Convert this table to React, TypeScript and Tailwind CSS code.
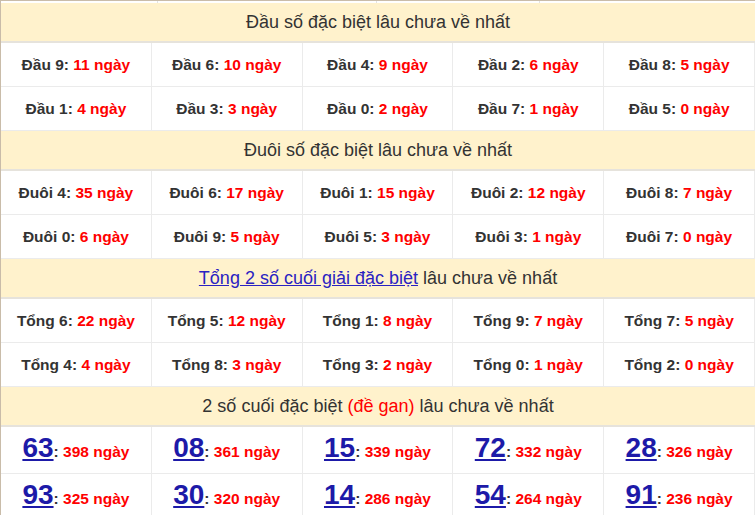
const dau = [
  [["Đầu 9", "11"], ["Đầu 6", "10"], ["Đầu 4", "9"], ["Đầu 2", "6"], ["Đầu 8", "5"]],
  [["Đầu 1", "4"], ["Đầu 3", "3"], ["Đầu 0", "2"], ["Đầu 7", "1"], ["Đầu 5", "0"]],
];

const duoi = [
  [["Đuôi 4", "35"], ["Đuôi 6", "17"], ["Đuôi 1", "15"], ["Đuôi 2", "12"], ["Đuôi 8", "7"]],
  [["Đuôi 0", "6"], ["Đuôi 9", "5"], ["Đuôi 5", "3"], ["Đuôi 3", "1"], ["Đuôi 7", "0"]],
];

const tong = [
  [["Tổng 6", "22"], ["Tổng 5", "12"], ["Tổng 1", "8"], ["Tổng 9", "7"], ["Tổng 7", "5"]],
  [["Tổng 4", "4"], ["Tổng 8", "3"], ["Tổng 3", "2"], ["Tổng 0", "1"], ["Tổng 2", "0"]],
];

const gan = [
  [["63", "398"], ["08", "361"], ["15", "339"], ["72", "332"], ["28", "326"]],
  [["93", "325"], ["30", "320"], ["14", "286"], ["54", "264"], ["91", "236"]],
];

function Header({ children }: { children: React.ReactNode }) {
  return (
    <div className="h-[40px] bg-[#fff2cc] border-b-2 border-[#e6e3dc] flex items-center justify-center text-[18px] text-[#333]">
      {children}
    </div>
  );
}

function Rows({ rows }: { rows: string[][][] }) {
  return (
    <>
      {rows.map((row, i) => (
        <div key={i} className="grid grid-cols-5 h-[44px] border-b border-[#ebebeb]">
          {row.map(([label, val], j) => (
            <div
              key={j}
              className="flex items-center justify-center border-r border-[#ebebeb] text-[15.5px] font-bold"
            >
              <span className="text-[#333]">{label}:</span>
              <span className="text-[#ff0000]">&nbsp;{val} ngày</span>
            </div>
          ))}
        </div>
      ))}
    </>
  );
}

export default function App() {
  return (
    <div
      className="w-[755px] h-[515px] overflow-hidden bg-white border-l border-[#c9bca9]"
      style={{ fontFamily: '"Liberation Sans", Arial, sans-serif' }}
    >
      {/* tail of the table above */}
      <div className="h-[3px] border-t border-[#c9bca9] flex">
        <div className="w-[157px] border-r border-[#e3e3e3]" />
        <div className="w-[219px] border-r border-[#e3e3e3]" />
        <div className="w-[163px] border-r border-[#e3e3e3]" />
        <div className="grow" />
      </div>

      <Header>Đầu số đặc biệt lâu chưa về nhất</Header>
      <Rows rows={dau} />

      <Header>Đuôi số đặc biệt lâu chưa về nhất</Header>
      <Rows rows={duoi} />

      <Header>
        <a href="#" className="text-[#2a22c2] underline">
          Tổng 2 số cuối giải đặc biệt
        </a>
        &nbsp;lâu chưa về nhất
      </Header>
      <Rows rows={tong} />

      <Header>
        2 số cuối đặc biệt&nbsp;<span className="text-[#ff0000]">(đề gan)</span>&nbsp;lâu chưa về nhất
      </Header>
      {gan.map((row, i) => (
        <div key={i} className="grid grid-cols-5 h-[47px] border-b border-[#ebebeb]">
          {row.map(([num, val], j) => (
            <div
              key={j}
              className="flex items-baseline justify-center pt-[4px] border-r border-[#ebebeb] font-bold"
            >
              <a href="#" className="text-[28px] leading-[34px] text-[#1d1aa8] underline">
                {num}
              </a>
              <span className="text-[15.5px] text-[#333]">:</span>
              <span className="text-[15.5px] text-[#ff0000]">&nbsp;{val} ngày</span>
            </div>
          ))}
        </div>
      ))}
    </div>
  );
}
